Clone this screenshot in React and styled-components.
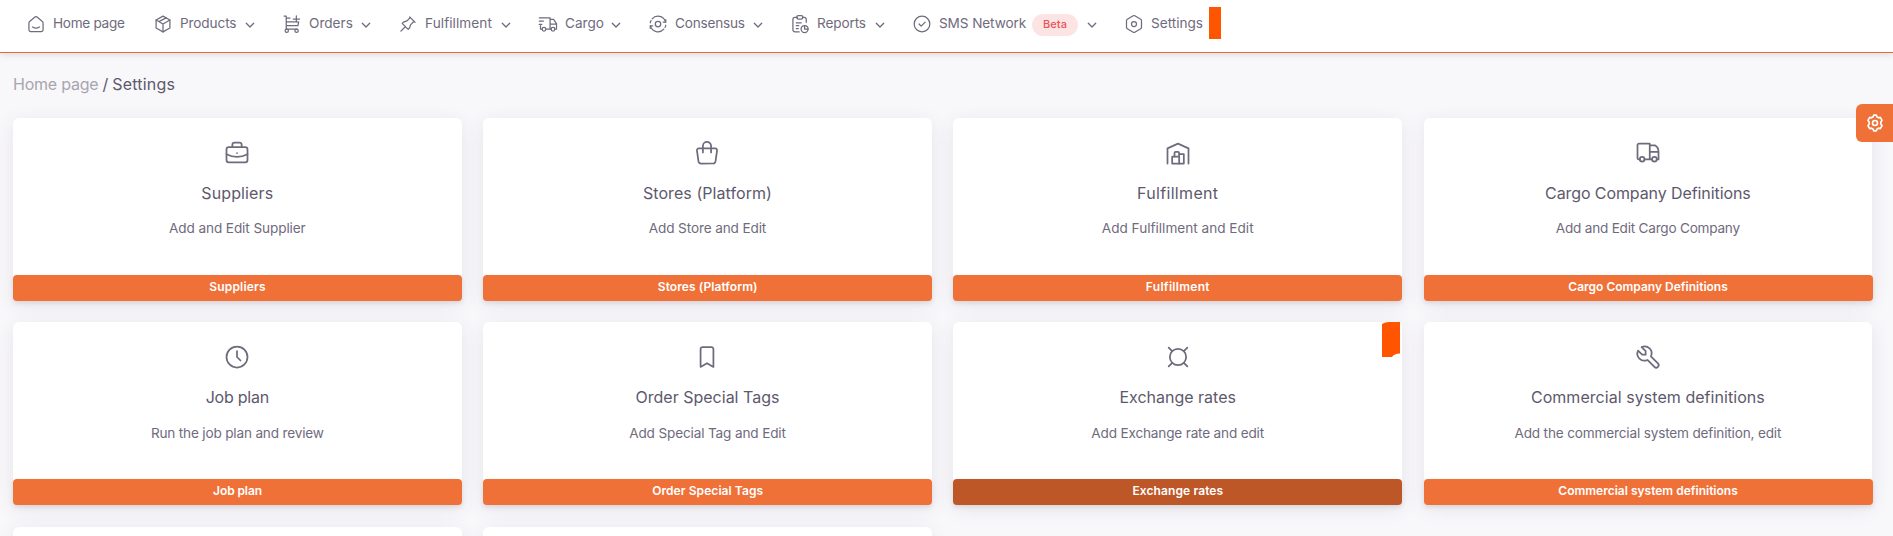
import React from "react";
import styled, { createGlobalStyle } from "styled-components";
import {
  TbBriefcase, TbBuildingWarehouse, TbClock, TbCurrency, TbTool,
} from "react-icons/tb";

const GlobalStyle = createGlobalStyle`
  * { box-sizing: border-box; }
  body {
    margin: 0;
    background: #f8f7fa;
    color: #6f6b7d;
    font-family: Inter, "Liberation Sans", sans-serif;
    overflow: hidden;
  }
`;

const Page = styled.div`
  height: 536px;
  overflow: hidden;
  position: relative;
`;

const Header = styled.header`
  height: 53px;
  padding-left: 26px;
  display: flex;
  align-items: flex-start;
  background: #fff;
  border-bottom: 1px solid #f0662b;
  box-shadow: 0 2px 6px rgba(75, 70, 92, 0.14);
`;

const NavItem = styled.a`
  height: 47px;
  display: flex;
  align-items: center;
  margin-right: ${(p) => p.$after ?? 25}px;
  color: #6f6b7d;
`;

const NavLabel = styled.span`
  width: ${(p) => p.$width}px;
  margin: 0 0 2px 7px;
  font-size: 13.6px;
  line-height: 20px;
  white-space: nowrap;
  letter-spacing: ${(p) => p.$spacing ?? 0}px;
`;

const Badge = styled.span`
  width: 46px;
  height: 22px;
  margin: 3px 0 0 7px;
  border-radius: 11px;
  display: flex;
  align-items: center;
  justify-content: center;
  padding-bottom: 2px;
  background: #fce4e4;
  color: #ea5455;
  font-size: 11px;
  font-weight: 500;
  letter-spacing: 0.1px;
`;

const Chevron = styled.svg`
  width: 14px;
  height: 14px;
  margin: 3px 0 0 7px;
  flex: none;
`;

const Glyph = styled.svg`
  width: ${(p) => p.$size}px;
  height: ${(p) => p.$size}px;
  flex: none;
  fill: none;
  stroke: currentColor;
  stroke-width: 1.5;
  stroke-linecap: round;
  stroke-linejoin: round;
`;

const Marker = styled.span`
  width: 12px;
  height: 32px;
  margin-top: 7px;
  background: #ff5500;
`;

const Breadcrumb = styled.nav`
  height: 65px;
  padding: 19px 13px 0;
  font-size: 16px;
  line-height: 24px;
  color: #5d596c;
  display: flex;
  gap: 4px;
`;

const Crumb = styled.span`
  color: ${(p) => (p.$muted ? "#a8a5b1" : "inherit")};
  letter-spacing: ${(p) => p.$spacing ?? 0}px;
`;

const Grid = styled.main`
  display: grid;
  grid-template-columns: repeat(4, 448.6px);
  grid-auto-rows: 183px;
  gap: 21.4px 21.6px;
  padding-left: 13px;
`;

const Card = styled.section`
  position: relative;
  display: flex;
  flex-direction: column;
  align-items: center;
  background: #fff;
  border-radius: 6px;
  box-shadow: 0 4px 18px rgba(75, 70, 92, 0.1);
`;

const CardIcon = styled.div`
  height: 28px;
  margin-top: 21px;
  color: #6f6b7d;
  svg {
    display: block;
    width: 28px;
    height: 28px;
    stroke-width: 1.5;
  }
`;

const CardTitle = styled.h5`
  margin: 14px 0 0;
  font-size: 16px;
  line-height: 24px;
  font-weight: 400;
  color: #5d596c;
  letter-spacing: ${(p) => p.$spacing ?? 0}px;
`;

const CardText = styled.p`
  margin: 13.2px 0 0;
  font-size: 13.6px;
  line-height: 20px;
  letter-spacing: ${(p) => p.$spacing ?? 0}px;
`;

const CardButton = styled.button`
  width: 449px;
  height: 26px;
  margin-top: auto;
  padding: 0 0 2px;
  border: 0;
  border-radius: 4px;
  align-self: flex-start;
  background: ${(p) => (p.$active ? "#be5728" : "#ef7138")};
  color: #fff;
  font: 600 12px/20px Inter, "Liberation Sans", sans-serif;
  letter-spacing: ${(p) => p.$spacing ?? 0}px;
  box-shadow: 0 2px 4px rgba(165, 163, 174, 0.3);
`;

const CardMark = styled.svg`
  position: absolute;
  top: 0;
  right: 2px;
  width: 18px;
  height: 35px;
`;

const Customizer = styled.button`
  position: absolute;
  top: 104px;
  right: 0;
  width: 37px;
  height: 38px;
  padding: 0 0 0 1px;
  border: 0;
  border-radius: 6px 0 0 6px;
  display: flex;
  align-items: center;
  justify-content: center;
  background: #ef7138;
  color: #fff;
  svg { stroke-width: 2; }
`;

const icon = (children) => ({ size = 20 }) => (
  <Glyph $size={size} viewBox="0 0 24 24">{children}</Glyph>
);

const HomeIcon = icon(<>
  <path d="M19.300 8.700 13.600 3.900a2.500 2.500 0 0 0-3.200 0L4.700 8.700a2.700 2.700 0 0 0-1.200 2.300V19A2 2 0 0 0 5.500 21h13a2 2 0 0 0 2-2v-8a2.700 2.700 0 0 0-1.200-2.300z" />
  <path d="M16 15.500c-2.200 1.600-5.800 1.600-8 0" />
</>);
const BoxIcon = icon(<>
  <path d="m12 2.500 8.300 4.700v9.600L12 21.500l-8.300-4.700V7.200z" />
  <path d="m12 12 8.300-4.800M12 12v9.500M12 12 3.700 7.200M8 9.700V8.600l8-4" />
</>);
const CartIcon = icon(<>
  <path d="M2.500 2.500h2.600V18H18M5.100 9.500h13.400M5.100 14h14l.9-4.500M13.500 6h7.500M17.200 2.300v7.400M5 5h4.500" />
  <circle cx="5.700" cy="20" r="2" /><circle cx="17.500" cy="20" r="2" />
</>);
const PinIcon = icon(
  <path d="m14.800 4.200-4 4L6.500 9.800 5 11.300l7.200 7.200 1.500-1.500 1.600-4.300 4-4M9 15l-5.500 5.500M14 3.500 20.500 10" />
);
const CargoIcon = icon(<>
  <path d="M1.500 4.500h13V18H10M1.500 8.500h5M1.500 12.500h3M14.500 6.500h4.200l3.500 5V18h-1.500M14.500 12h7.700M3 14v4h1.500M14.500 18h1" />
  <circle cx="7.200" cy="18.300" r="2.200" /><circle cx="18" cy="18.300" r="2.200" />
</>);
const ConsensusIcon = icon(<>
  <circle cx="12" cy="12" r="3.300" />
  <path d="M5 5.800A9.300 9.300 0 0 1 21 9.800M19 18.200A9.300 9.300 0 0 1 3 14.200M21.300 13.500A9.300 9.300 0 0 1 20.500 16M2.700 10.500A9.300 9.300 0 0 1 3.500 8" />
  <path d="M21.300 6.800v3h-3M2.700 17.200v-3h3" />
</>);
const ReportIcon = icon(<>
  <path d="M9 4H6a2.500 2.500 0 0 0-2.500 2.500V19A2.500 2.500 0 0 0 6 21.500h5M15 4h2a2.500 2.500 0 0 1 2.500 2.500V10" />
  <rect x="8" y="2" width="7.500" height="4" rx="2" />
  <path d="M7.500 10.500h6M7.500 14h3M7.500 17.500h2.500" />
  <circle cx="17.500" cy="18" r="4.200" /><path d="M17.500 13.800V18h4.200" />
</>);
const CheckIcon = icon(<>
  <circle cx="12" cy="12" r="9.400" /><path d="m8.500 12 2.500 2.600 4.800-4.800" />
</>);
const HexIcon = icon(<>
  <path d="M11 2.200a2 2 0 0 1 2 0l7 4.200a2 2 0 0 1 1 1.700v7.800a2 2 0 0 1-1 1.700l-7 4.200a2 2 0 0 1-2 0l-7-4.200a2 2 0 0 1-1-1.700V8.100a2 2 0 0 1 1-1.700z" />
  <circle cx="12" cy="12" r="3" />
</>);
const BagIcon = icon(<>
  <path d="M5 8h14a1.600 1.600 0 0 1 1.600 1.900l-1.300 9.300A2.200 2.200 0 0 1 17.100 21H6.900a2.200 2.200 0 0 1-2.200-1.800L3.400 9.900A1.600 1.600 0 0 1 5 8z" />
  <path d="M8.500 11.500V6a3.500 3.500 0 0 1 7 0v5.500" />
</>);
const TruckIcon = icon(<>
  <path d="M5 17.500H4.200A1.200 1.200 0 0 1 3 16.300V5.200A1.200 1.200 0 0 1 4.200 4H13.500v13.500H9M13.500 5.500h4.700c1.800 1 2.800 3.300 2.800 5.500v6.500h-1.500M13.500 11H21M13.500 17.500H15.500" />
  <circle cx="7" cy="17.300" r="2" /><circle cx="17.500" cy="17.300" r="2" />
</>);
const BookmarkIcon = icon(
  <path d="M8.300 3.500h7.400a1.800 1.800 0 0 1 1.800 1.800v15.200L12 17.300l-5.500 3.200V5.300a1.800 1.800 0 0 1 1.800-1.800z" />
);
const GearIcon = icon(<>
  <path d="M9.800 4.600 10.400 2.600h3.200l.6 2 2 1.200 2.100-.5 2.200 3.500L19 10.700v2.600l1.500 1.900-2.200 3.500-2.100-.5-2 1.200-.6 2h-3.200l-.6-2-2-1.200-2.100.5-2.200-3.500L5 13.300v-2.600L3.500 8.800l2.200-3.500 2.100.5z" />
  <circle cx="12" cy="12" r="3" />
</>);

const NAV = [
  { label: "Home page", Icon: HomeIcon, width: 71, spacing: -0.3, after: 29, plain: true },
  { label: "Products", Icon: BoxIcon, width: 56, spacing: -0.12 },
  { label: "Orders", Icon: CartIcon, width: 43 },
  { label: "Fulfillment", Icon: PinIcon, width: 67, spacing: 0.08 },
  { label: "Cargo", Icon: CargoIcon, width: 37 },
  { label: "Consensus", Icon: ConsensusIcon, width: 69, spacing: -0.2 },
  { label: "Reports", Icon: ReportIcon, width: 49, spacing: -0.12 },
  { label: "SMS Network", Icon: CheckIcon, width: 86, spacing: -0.1, badge: "Beta" },
  { label: "Settings", Icon: HexIcon, width: 52, after: 6, plain: true },
];

// spacing: letter spacing of the title, the description and the button
const CARDS = [
  { title: "Suppliers", text: "Add and Edit Supplier", Icon: TbBriefcase, spacing: [0.13, -0.1, 0.2] },
  { title: "Stores (Platform)", text: "Add Store and Edit", Icon: BagIcon, spacing: [0.07, -0.13, 0.07] },
  { title: "Fulfillment", text: "Add Fulfillment and Edit", Icon: TbBuildingWarehouse, spacing: [0.33, 0, 0.3] },
  { title: "Cargo Company Definitions", text: "Add and Edit Cargo Company", Icon: TruckIcon, spacing: [-0.09, -0.23, 0] },
  { title: "Job plan", text: "Run the job plan and review", Icon: TbClock, spacing: [-0.25, -0.18, -0.1] },
  { title: "Order Special Tags", text: "Add Special Tag and Edit", Icon: BookmarkIcon, spacing: [0, -0.15, 0.07] },
  { title: "Exchange rates", text: "Add Exchange rate and edit", Icon: TbCurrency, spacing: [0, -0.18, 0.1], active: true },
  { title: "Commercial system definitions", text: "Add the commercial system definition, edit", Icon: TbTool, spacing: [0.05, -0.17, 0] },
];

export default function App() {
  return (
    <Page>
      <GlobalStyle />
      <Header>
        {NAV.map(({ label, Icon, width, spacing, after, plain, badge }) => (
          <NavItem key={label} $after={after}>
            <Icon />
            <NavLabel $width={width} $spacing={spacing}>{label}</NavLabel>
            {badge && <Badge>{badge}</Badge>}
            {!plain && (
              <Chevron viewBox="0 0 14 14" fill="none" stroke="currentColor" strokeWidth="1.3" strokeLinecap="round" strokeLinejoin="round">
                <path d="m3.300 5.200 3.700 3.800 3.700-3.800" />
              </Chevron>
            )}
          </NavItem>
        ))}
        <Marker />
      </Header>
      <Breadcrumb>
        <Crumb $muted $spacing={-0.22}>Home page</Crumb>
        <Crumb>/</Crumb>
        <Crumb $spacing={0.2}>Settings</Crumb>
      </Breadcrumb>
      <Grid>
        {CARDS.map(({ title, text, Icon, spacing, active }) => (
          <Card key={title}>
            <CardIcon><Icon size={28} /></CardIcon>
            <CardTitle $spacing={spacing[0]}>{title}</CardTitle>
            <CardText $spacing={spacing[1]}>{text}</CardText>
            <CardButton $active={active} $spacing={spacing[2]}>{title}</CardButton>
            {active && (
              <CardMark viewBox="0 0 18 35">
                <path d="M0 2Q3 0 7 0H18V31.500Q12 31.500 10 35H0Z" fill="#ff5500" />
              </CardMark>
            )}
          </Card>
        ))}
        <Card />
        <Card />
      </Grid>
      <Customizer><GearIcon size={20} /></Customizer>
    </Page>
  );
}
